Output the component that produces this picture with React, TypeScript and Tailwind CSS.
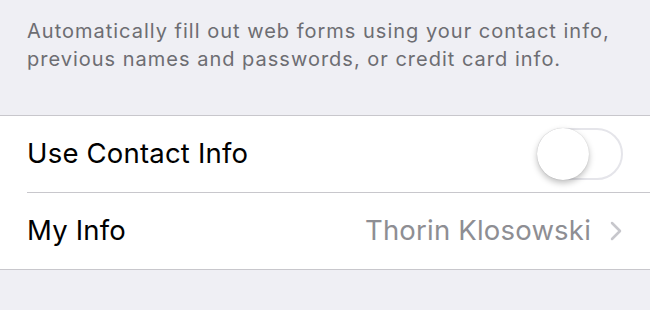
export default function App() {
  return (
    <div className="h-[310px] w-[650px] overflow-hidden bg-[#efeff4]" style={{ fontFamily: 'Inter, "Noto Sans", sans-serif' }}>
      <p className="whitespace-nowrap px-[27px] pt-[17px] text-[20px] leading-[28px] tracking-[1px] text-[#6d6d72]">
        Automatically fill out web forms using your contact info,
        <br />
        previous names and passwords, or credit card info.
      </p>
      <div className="mt-[42px] border-y border-[#c8c7cc] bg-white">
        <div className="flex h-[76px] items-center justify-between pl-[27px] pr-[27px]">
          <span className="text-[27.5px] tracking-[0.2px] text-black">Use Contact Info</span>
          <div className="h-[52px] w-[86px] rounded-full border-2 border-[#e5e5ea] bg-white">
            <div className="-ml-[2px] -mt-[2px] h-[52px] w-[52px] rounded-full bg-white shadow-[0_3px_6px_rgba(0,0,0,0.25),0_0_1px_rgba(0,0,0,0.2)]" />
          </div>
        </div>
        <div className="ml-[27px] h-px bg-[#c8c7cc]" />
        <div className="flex h-[76px] items-center justify-between pl-[27px] pr-[28px]">
          <span className="text-[27.5px] tracking-[0.2px] text-black">My Info</span>
          <div className="flex items-center gap-[19px]">
            <span className="text-[27.5px] tracking-[0.2px] text-[#8e8e93]">Thorin Klosowski</span>
            <svg width="12" height="20" viewBox="0 0 12 20" fill="none">
              <path d="M2 2l8 8-8 8" stroke="#c7c7cc" strokeWidth="2.5" strokeLinecap="round" strokeLinejoin="round" />
            </svg>
          </div>
        </div>
      </div>
    </div>
  );
}
